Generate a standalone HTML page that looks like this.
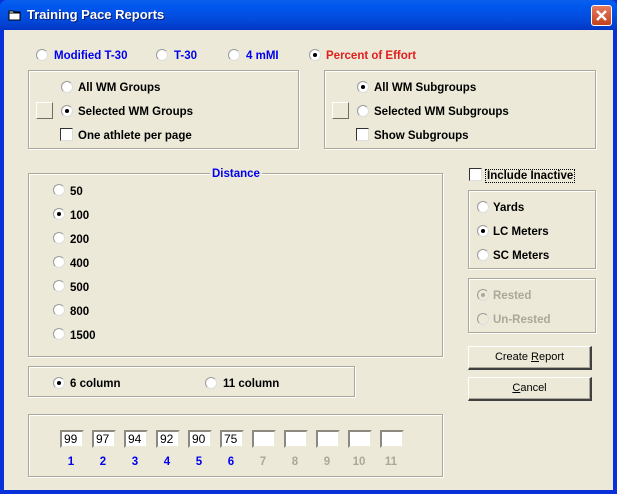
<!DOCTYPE html>
<html><head><style>
*{margin:0;padding:0;box-sizing:border-box}
body{width:617px;height:494px;overflow:hidden;background:#0831d9;font-family:"Liberation Sans",Tahoma,sans-serif;font-size:11.5px;font-weight:bold;position:relative}
.title{position:absolute;left:0;top:0;width:617px;height:30px;background:linear-gradient(#0a5fec,#0058ee 20%,#0348d8 70%,#0236c4);border-radius:7px 7px 0 0}
.title span{position:absolute;left:27px;top:7px;color:#fff;font-size:13px;font-weight:bold;text-shadow:1px 1px #0a1e78}
.body{position:absolute;left:4px;top:30px;width:609px;height:460px;background:#ece9d8}
.g{position:absolute;border:1px solid #aca899;box-shadow:inset 1px 1px #fff,1px 1px #fff}
.r{position:absolute;width:12px;height:12px;border-radius:50%;background:#fff;border:1px solid #9a9a9a;border-right-color:#ddd;border-bottom-color:#ddd}
.r.on::after{content:"";position:absolute;left:3px;top:3px;width:4px;height:4px;border-radius:50%;background:#000}
.r.dis{background:#ece9d8}
.r.dis.on::after{background:#aca899}
.c{position:absolute;width:13px;height:13px;background:#fff;border:1px solid #333;border-right-color:#ddd;border-bottom-color:#ddd}
.t{position:absolute;white-space:nowrap;line-height:12px;margin-top:1px}
.b{position:absolute;width:17px;height:17px;border:1px solid #fff;border-right-color:#716f64;border-bottom-color:#716f64;background:#ece9d8}
.btn{position:absolute;width:124px;height:24px;border:1px solid #fff;border-right:2px solid #404040;border-bottom:2px solid #404040;background:#ece9d8;font-weight:normal;font-size:11px;text-align:center;line-height:21px;box-shadow:inset -1px -1px #aca899}
.in{position:absolute;width:24px;height:18px;background:#fff;border:2px solid #8c8a80;border-right-color:#ece9d8;border-bottom-color:#ece9d8;font-weight:normal;font-size:12px;padding-left:2px;line-height:14px}
.n{position:absolute;width:24px;text-align:center;color:#0000f0;top:456px}
.n.d{color:#aca899}
.blue{color:#0000f0}.red{color:#e0201c}.gray{color:#aca899}
</style></head><body>
<div class="title"><svg style="position:absolute;left:8px;top:9px" width="13" height="12"><path d="M1 2h4l1 1h6v8H1z" fill="#fff" stroke="#000"/><path d="M1 4h11" stroke="#000"/></svg><span>Training Pace Reports</span></div>
<div style="position:absolute;left:591px;top:5px;width:21px;height:21px;border:1px solid #fff;border-radius:3px;background:linear-gradient(#e67a5e,#c4401e)"><svg width="19" height="19"><path d="M5 5l9 9M14 5l-9 9" stroke="#fff" stroke-width="2.4"/></svg></div>
<div class="body"></div>
<div class="r" style="left:36px;top:49px"></div><div class="t blue" style="left:54px;top:49px">Modified T-30</div>
<div class="r" style="left:156px;top:49px"></div><div class="t blue" style="left:174px;top:49px">T-30</div>
<div class="r" style="left:228px;top:49px"></div><div class="t blue" style="left:246px;top:49px">4 mMI</div>
<div class="r on" style="left:309px;top:49px"></div><div class="t red" style="left:326px;top:49px">Percent of Effort</div>
<div class="g" style="left:28px;top:70px;width:271px;height:79px"></div>
<div class="r" style="left:61px;top:81px"></div><div class="t" style="left:78px;top:81px">All WM Groups</div>
<div class="b" style="left:36px;top:102px"></div>
<div class="r on" style="left:61px;top:105px"></div><div class="t" style="left:78px;top:105px">Selected WM Groups</div>
<div class="c" style="left:60px;top:128px"></div><div class="t" style="left:78px;top:129px">One athlete per page</div>
<div class="g" style="left:324px;top:70px;width:272px;height:79px"></div>
<div class="r on" style="left:357px;top:81px"></div><div class="t" style="left:374px;top:81px">All WM Subgroups</div>
<div class="b" style="left:332px;top:102px"></div>
<div class="r" style="left:357px;top:105px"></div><div class="t" style="left:374px;top:105px">Selected WM Subgroups</div>
<div class="c" style="left:356px;top:128px"></div><div class="t" style="left:374px;top:129px">Show Subgroups</div>
<div class="g" style="left:28px;top:173px;width:415px;height:184px"></div>
<div class="t blue" style="left:210px;top:167px;background:#ece9d8;padding:0 2px">Distance</div>
<div class="r" style="left:53px;top:184px"></div><div class="t" style="left:70px;top:185px">50</div>
<div class="r on" style="left:53px;top:208px"></div><div class="t" style="left:70px;top:209px">100</div>
<div class="r" style="left:53px;top:232px"></div><div class="t" style="left:70px;top:233px">200</div>
<div class="r" style="left:53px;top:256px"></div><div class="t" style="left:70px;top:257px">400</div>
<div class="r" style="left:53px;top:280px"></div><div class="t" style="left:70px;top:281px">500</div>
<div class="r" style="left:53px;top:304px"></div><div class="t" style="left:70px;top:305px">800</div>
<div class="r" style="left:53px;top:328px"></div><div class="t" style="left:70px;top:329px">1500</div>
<div class="c" style="left:469px;top:168px"></div><div class="t" style="left:485px;top:168px;border:1px dotted #000;padding:0 1px">Include Inactive</div>
<div class="g" style="left:468px;top:190px;width:128px;height:79px"></div>
<div class="r" style="left:477px;top:201px"></div><div class="t" style="left:493px;top:201px">Yards</div>
<div class="r on" style="left:477px;top:225px"></div><div class="t" style="left:493px;top:225px">LC Meters</div>
<div class="r" style="left:477px;top:249px"></div><div class="t" style="left:493px;top:249px">SC Meters</div>
<div class="g" style="left:468px;top:278px;width:128px;height:55px"></div>
<div class="r dis on" style="left:477px;top:289px"></div><div class="t gray" style="left:493px;top:289px">Rested</div>
<div class="r dis" style="left:477px;top:313px"></div><div class="t gray" style="left:493px;top:313px">Un-Rested</div>
<div class="btn" style="left:468px;top:346px">Create <u>R</u>eport</div>
<div class="btn" style="left:468px;top:377px"><u>C</u>ancel</div>
<div class="g" style="left:28px;top:366px;width:327px;height:31px"></div>
<div class="r on" style="left:53px;top:377px"></div><div class="t" style="left:70px;top:377px">6 column</div>
<div class="r" style="left:205px;top:377px"></div><div class="t" style="left:223px;top:377px">11 column</div>
<div class="g" style="left:28px;top:414px;width:415px;height:63px"></div>
<div class="in" style="left:60px;top:430px">99</div><div class="n" style="left:59px">1</div>
<div class="in" style="left:92px;top:430px">97</div><div class="n" style="left:91px">2</div>
<div class="in" style="left:124px;top:430px">94</div><div class="n" style="left:123px">3</div>
<div class="in" style="left:156px;top:430px">92</div><div class="n" style="left:155px">4</div>
<div class="in" style="left:188px;top:430px">90</div><div class="n" style="left:187px">5</div>
<div class="in" style="left:220px;top:430px">75</div><div class="n" style="left:219px">6</div>
<div class="in" style="left:252px;top:430px"></div><div class="n d" style="left:251px">7</div>
<div class="in" style="left:284px;top:430px"></div><div class="n d" style="left:283px">8</div>
<div class="in" style="left:316px;top:430px"></div><div class="n d" style="left:315px">9</div>
<div class="in" style="left:348px;top:430px"></div><div class="n d" style="left:347px">10</div>
<div class="in" style="left:380px;top:430px"></div><div class="n d" style="left:379px">11</div>
</body></html>
